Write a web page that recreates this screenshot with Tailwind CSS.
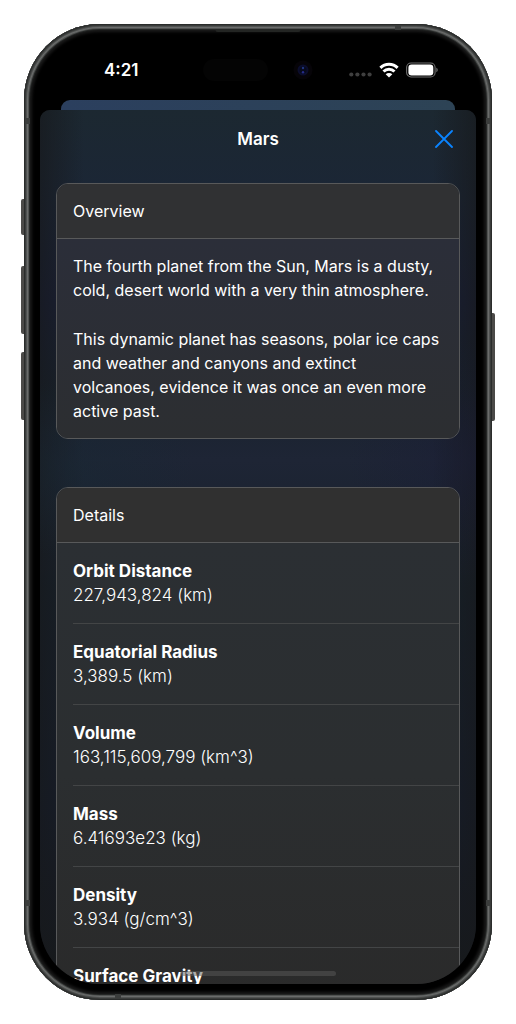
<!DOCTYPE html>
<html lang="en">
<head>
<meta charset="utf-8">
<meta name="viewport" content="width=device-width, initial-scale=1">
<title>Mars</title>
<script src="https://cdn.jsdelivr.net/npm/@tailwindcss/browser@4"></script>
</head>
<body class="bg-white font-['Inter','Liberation_Sans',sans-serif] text-white antialiased">
<div class="flex h-screen w-full p-6">
  <div class="relative flex w-full rounded-[76px] bg-black p-4 shadow-[inset_0_0_0_1px_#2a2c2b,inset_0_0_0_2px_#3a3c3b,inset_0_0_0_3px_#505251,inset_0_0_0_4px_#6a6c6b,inset_0_0_0_5px_#505251,inset_0_0_0_6px_#242625,inset_0_0_3px_8px_#1a1a1a]">
    <!-- hardware buttons -->
    <span class="absolute -left-[3px] top-[175px] h-9 w-[3px] rounded-l-xs bg-[#4b4a48]"></span>
    <span class="absolute -left-[3px] top-[242px] h-[68px] w-[3px] rounded-l-xs bg-[#4b4a48]"></span>
    <span class="absolute -left-[3px] top-[328px] h-[68px] w-[3px] rounded-l-xs bg-[#4b4a48]"></span>
    <span class="absolute -right-[3px] top-[289px] h-[108px] w-[3px] rounded-r-xs bg-[#4b4a48]"></span>
    <!-- antenna bands -->
    <span class="absolute left-[2px] top-[94px] h-[6px] w-[4px] bg-[#3b3d3c]"></span>
    <span class="absolute right-[2px] top-[94px] h-[6px] w-[4px] bg-[#3b3d3c]"></span>
    <span class="absolute left-[2px] bottom-[94px] h-[6px] w-[4px] bg-[#3b3d3c]"></span>
    <span class="absolute right-[2px] bottom-[94px] h-[6px] w-[4px] bg-[#3b3d3c]"></span>
    <span class="absolute right-[91px] top-[2px] h-[4px] w-[6px] bg-[#3b3d3c]"></span>
    <span class="absolute left-[91px] bottom-[2px] h-[4px] w-[6px] bg-[#3b3d3c]"></span>
    <!-- earpiece -->
    <span class="absolute left-1/2 top-[6px] h-[2px] w-[85px] -translate-x-1/2 rounded-b-sm bg-[#232523]"></span>

    <div class="relative flex w-full flex-col overflow-hidden rounded-t-[48px] rounded-b-[60px] bg-black">
      <header class="flex h-[60px] shrink-0 items-center">
        <div class="flex w-full items-center justify-between pl-16 pr-[38px]">
          <time class="text-[17px] leading-6 font-semibold">4:21</time>
          <div class="mr-auto ml-16 flex items-center gap-[25px]">
            <span class="h-[22px] w-[65px] rounded-full bg-[#040404]"></span>
            <svg class="h-5 w-5" viewBox="0 0 20 20" aria-hidden="true"><circle cx="10" cy="10" r="9.500" fill="#060408"/><circle cx="10" cy="10" r="5.500" fill="#0b0d2c"/><circle cx="10" cy="10" r="3.500" fill="#070a1c"/><circle cx="10" cy="8" r="1.200" fill="#20347e"/><circle cx="10" cy="12.300" r="1.200" fill="#252c8a"/></svg>
          </div>
          <div class="flex items-center gap-[7px]">
            <svg class="mt-2 h-[5px] w-[23px]" viewBox="0 0 23 5" fill="#3f3f3f" aria-hidden="true"><circle cx="2.300" cy="2.500" r="2.100"/><circle cx="8.400" cy="2.500" r="2.100"/><circle cx="14.500" cy="2.500" r="2.100"/><circle cx="20.600" cy="2.500" r="2.100"/></svg>
            <svg class="h-4 w-5" viewBox="0 0 20 16" fill="none" stroke="#fff" stroke-width="3" aria-hidden="true"><path d="M1.400 5.900a12.200 12.200 0 0 1 17.200 0"/><path d="M4.500 9.500a7.800 7.800 0 0 1 11 0"/><path d="M10 15.600 6.700 12.300a4.700 4.700 0 0 1 6.600 0Z" fill="#fff" stroke="none"/></svg>
            <svg class="h-4 w-8" viewBox="0 0 32 16" aria-hidden="true"><rect x=".6" y="1" width="28.500" height="14" rx="4.500" fill="none" stroke="#6f6f6f" stroke-width="1.100"/><rect x="2.400" y="2.500" width="24.900" height="11" rx="3.200" fill="#fff"/><path d="M30.400 5.800c1.700.7 1.700 3.700 0 4.400Z" fill="#777"/></svg>
          </div>
        </div>
      </header>

      <div class="mx-[21px] h-[10px] shrink-0 rounded-t-[9px] bg-linear-to-r from-[#2b3f5e] to-[#2d4355]"></div>

      <main class="relative flex min-h-0 flex-1 flex-col overflow-hidden rounded-t-[10px] bg-[linear-gradient(#1c2831,#1b2636_10%,#191f38_22%,#18222e_32%,#1e2535_40%,#16202a_55%,#151c2b_80%,#17191b)]">
        <div class="absolute inset-0 bg-linear-to-r from-[#17191c]/70 via-transparent via-10% to-transparent"></div>
        <div class="absolute inset-0 bg-linear-to-l from-[#17191c]/70 via-transparent via-10% to-transparent"></div>
        <div class="absolute inset-0 bg-[radial-gradient(130px_120px_at_100%_40%,#1a1c3680,transparent),radial-gradient(120px_90px_at_8%_41%,#18283380,transparent)]"></div>

        <div class="relative grid h-[57px] shrink-0 grid-cols-[1fr_auto_1fr] items-center pr-[23px]">
          <h1 class="col-start-2 pl-[23px] text-[17px] leading-6 font-semibold">Mars</h1>
          <button type="button" aria-label="Close" class="justify-self-end">
            <svg class="h-[18px] w-[18px]" viewBox="0 0 18 18" fill="none" stroke="#0a84ff" stroke-width="1.800" stroke-linecap="round" aria-hidden="true"><path d="M1 1 17 17M17 1 1 17"/></svg>
          </button>
        </div>

        <div class="relative flex flex-col gap-12 px-4 pt-4">
          <section class="overflow-hidden rounded-xl border border-[#58595a]">
            <h2 class="border-b border-[#58595a] bg-[#303133] px-4 py-[15px] text-[16px] leading-6">Overview</h2>
            <div class="flex flex-col gap-[25px] bg-linear-to-b from-[#2b2e39] to-[#2c2e31] px-4 py-[15px] text-[16px] leading-6">
              <p>The fourth planet from the Sun, Mars is a dusty, cold, desert world with a very thin atmosphere.</p>
              <p>This dynamic planet has seasons, polar ice caps and weather and canyons and extinct<br>volcanoes, evidence it was once an even more active past.</p>
            </div>
          </section>

          <section class="overflow-hidden rounded-xl border border-[#58595a]">
            <h2 class="border-b border-[#58595a] bg-[#303030] px-4 py-[15px] text-[16px] leading-6">Details</h2>
            <dl class="bg-linear-to-b from-[#2b2f33] via-[#2b2e30] to-[#2a2a2a] pl-4 text-[17px] leading-6">
              <div class="border-b border-[#434546] py-4"><dt class="font-bold">Orbit Distance</dt><dd class="font-light">227,943,824 (km)</dd></div>
              <div class="border-b border-[#434546] py-4"><dt class="font-bold">Equatorial Radius</dt><dd class="font-light">3,389.5 (km)</dd></div>
              <div class="border-b border-[#434546] py-4"><dt class="font-bold">Volume</dt><dd class="font-light">163,115,609,799 (km^3)</dd></div>
              <div class="border-b border-[#434546] py-4"><dt class="font-bold">Mass</dt><dd class="font-light">6.41693e23 (kg)</dd></div>
              <div class="border-b border-[#434546] py-4"><dt class="font-bold">Density</dt><dd class="font-light">3.934 (g/cm^3)</dd></div>
              <div class="py-4"><dt class="font-bold">Surface Gravity</dt></div>
            </dl>
          </section>
        </div>
      </main>
      <!-- home indicator -->
      <span class="absolute bottom-2 left-1/2 h-[5px] w-[156px] -translate-x-1/2 rounded-full bg-[#5a5a5a]/50"></span>
    </div>
  </div>
</div>
</body>
</html>
